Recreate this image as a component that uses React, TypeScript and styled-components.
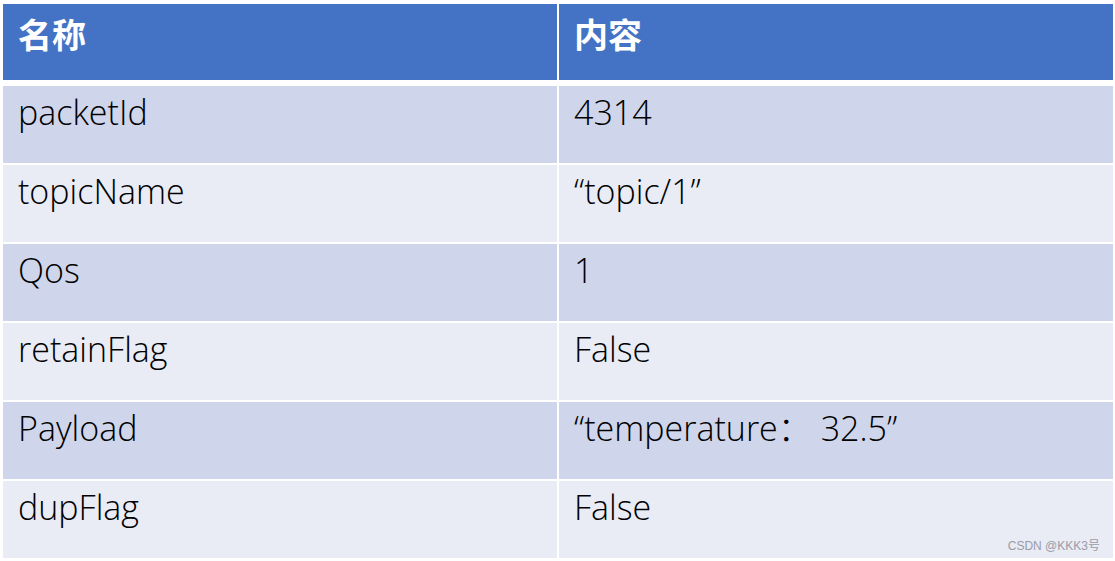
import React from 'react';
import styled, { createGlobalStyle } from 'styled-components';

const GlobalStyle = createGlobalStyle`
    html, body {
        margin: 0;
        padding: 0;
        background: #ffffff;
    }
    body {
        font-family: "Open Sans", "Noto Sans CJK SC", sans-serif;
    }
`;

const Page = styled.div`
    position: relative;
    width: 1115px;
    height: 561px;
    padding: 4px 2px 0 3px;
    box-sizing: border-box;
    background: #ffffff;
    overflow: hidden;
`;

const HeaderRow = styled.div`
    display: grid;
    grid-template-columns: 554px 554px;
    column-gap: 2px;
    height: 76px;
    margin-bottom: 6px;
`;

const Body = styled.div`
    display: grid;
    grid-template-columns: 554px 554px;
    grid-auto-rows: 77px;
    column-gap: 2px;
    row-gap: 2px;
`;

const HeaderCell = styled.div`
    background: #4472c4;
    color: #ffffff;
    font-family: "Noto Sans CJK SC", sans-serif;
    font-weight: 700;
    font-size: 34px;
    line-height: 40px;
    padding: 10px 0 0 15px;
`;

const Cell = styled.div<{ $odd: boolean }>`
    background: ${p => (p.$odd ? '#cfd5ea' : '#e9ebf5')};
    color: #000000;
    font-size: 34px;
    line-height: 40px;
    padding: 6px 0 0 15px;
    font-weight: 300;
`;

const Watermark = styled.div`
    position: absolute;
    right: 15px;
    bottom: 8px;
    font-family: "Liberation Sans", "Noto Sans CJK SC", sans-serif;
    font-size: 12px;
    color: #9a9ca6;
`;

const rows: [string, string][] = [
    ['packetId', '4314'],
    ['topicName', '\u201ctopic/1\u201d'],
    ['Qos', '1'],
    ['retainFlag', 'False'],
    ['Payload', '\u201ctemperature\uff1a 32.5\u201d'],
    ['dupFlag', 'False'],
];

export default function App() {
    return <>
        <GlobalStyle />
        <Page>
            <HeaderRow>
                <HeaderCell>名称</HeaderCell>
                <HeaderCell>内容</HeaderCell>
            </HeaderRow>
            <Body>
                {rows.map(([name, value], i) => (
                    <React.Fragment key={name}>
                        <Cell $odd={i % 2 === 0}>{name}</Cell>
                        <Cell $odd={i % 2 === 0}>{value}</Cell>
                    </React.Fragment>
                ))}
            </Body>
            <Watermark>CSDN @KKK3号</Watermark>
        </Page>
    </>;
}
